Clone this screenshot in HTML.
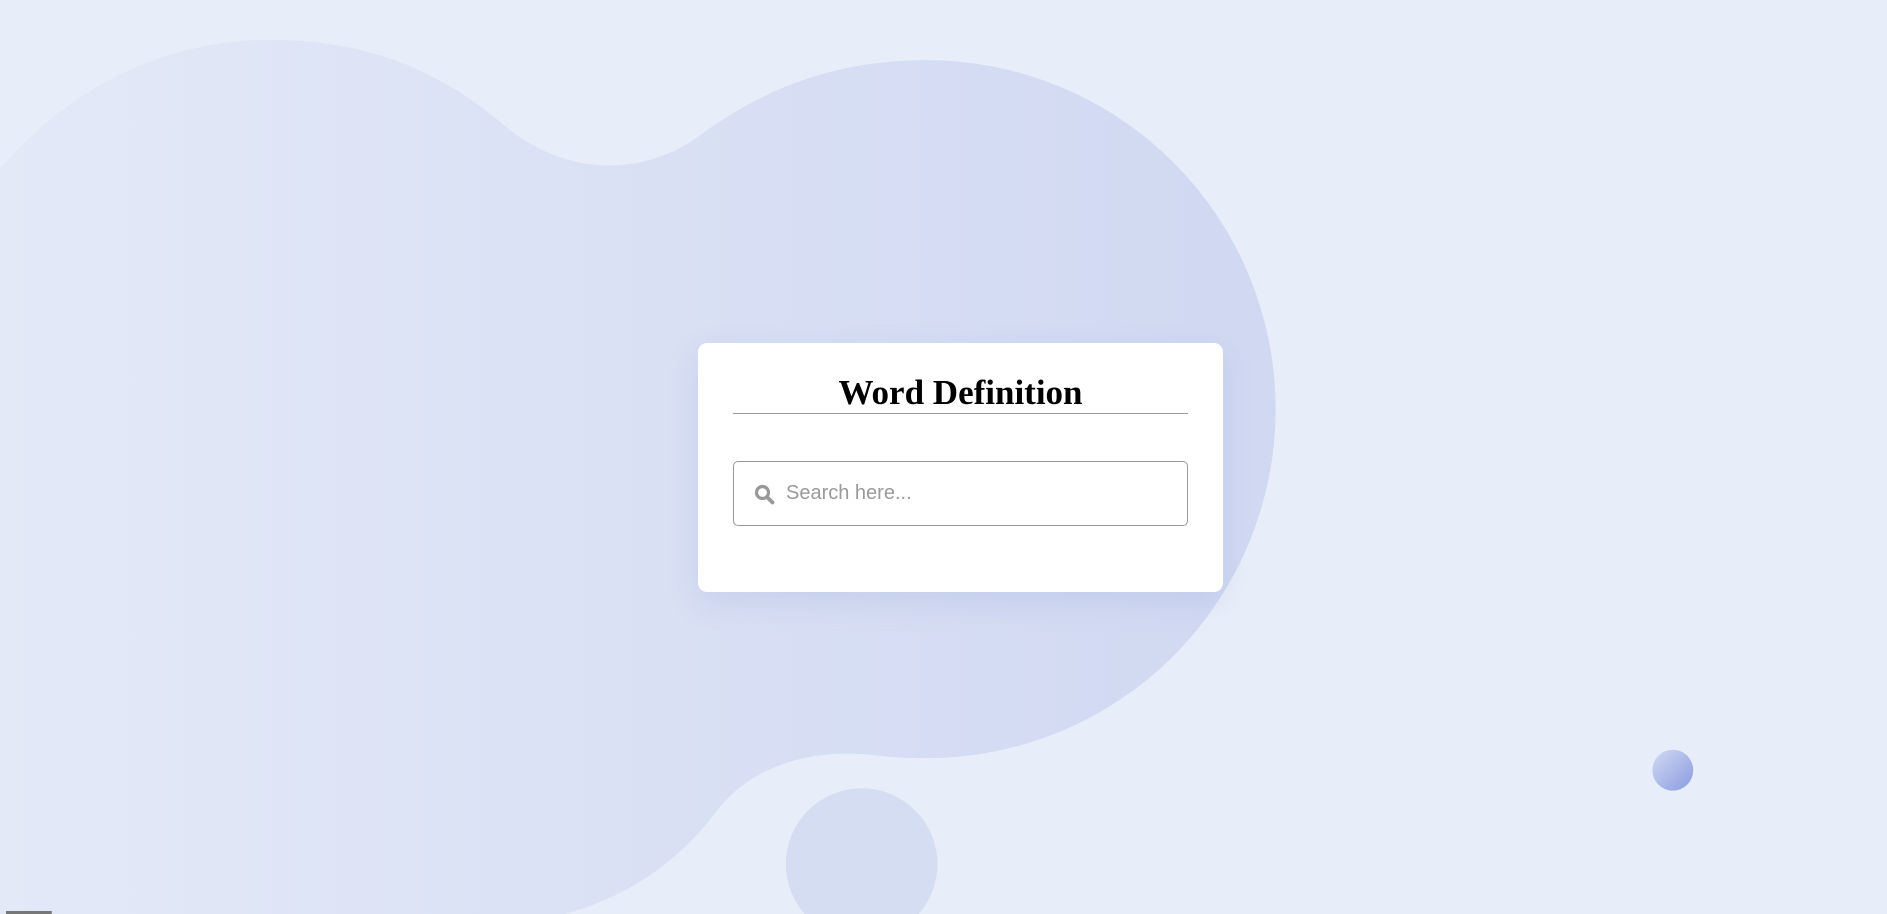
<!DOCTYPE html>
<html><head><meta charset="utf-8"><style>
html,body{margin:0;padding:0;width:1887px;height:914px;overflow:hidden;background:#e8eef9;font-family:"Liberation Sans",sans-serif}
svg.bg{position:absolute;left:0;top:0}
.card{position:absolute;left:698px;top:343px;width:525px;height:249px;background:#fff;border-radius:9px;box-shadow:0 10px 30px rgba(120,140,200,.18)}
h1{position:absolute;left:698px;width:525px;top:373px;margin:0;text-align:center;font:bold 35px "Liberation Serif",serif;color:#000}
.hr{position:absolute;left:733px;width:455px;top:413px;height:1px;background:#9a9a9a}
.inp{position:absolute;left:733px;top:461px;width:453px;height:63px;border:1px solid #999;border-radius:5px;background:#fff}
.ph{position:absolute;left:786px;top:482px;font-size:20px;color:#9a9a9a}
</style></head><body>
<svg class="bg" width="1887" height="914" viewBox="0 0 1568 759.5" preserveAspectRatio="none">
<defs>
<linearGradient id="g" gradientUnits="userSpaceOnUse" x1="0" x2="1060" y1="0" y2="0"><stop offset="0" stop-color="#e3e9f7"/><stop offset="1" stop-color="#d0d8f2"/></linearGradient>
<linearGradient id="b" x1="0" x2="1" y1="0" y2="1"><stop offset="0" stop-color="#d2daf4"/><stop offset="1" stop-color="#8a9ae0"/></linearGradient>
</defs>
<path fill="url(#g)" d="M0,140 C60,70 140,33 225,33 C310,33 370,62 420,105 C475,150 540,145 585,110 C640,70 700,50 770,50 L770,630 C750,630 740,629 730,628 C670,620 620,640 595,675 C560,720 520,745 470,759.5 L0,759.5 Z"/>
<circle cx="770" cy="340" r="290" fill="url(#g)"/>
<circle cx="716" cy="718" r="63" fill="#d5ddf2"/>
<circle cx="1390" cy="640" r="17" fill="url(#b)"/>
<rect x="5" y="757" width="38" height="2.5" fill="#777"/>
</svg>
<div class="card"></div>
<h1>Word Definition</h1>
<div class="hr"></div>
<div class="inp"></div>
<svg style="position:absolute;left:754px;top:484px" width="21" height="21" viewBox="0 0 21 21"><circle cx="8.5" cy="8.5" r="6" fill="none" stroke="#999" stroke-width="3.2"/><line x1="13" y1="13" x2="18.5" y2="18.5" stroke="#999" stroke-width="3.8" stroke-linecap="round"/></svg>
<div class="ph">Search here...</div>
</body></html>
